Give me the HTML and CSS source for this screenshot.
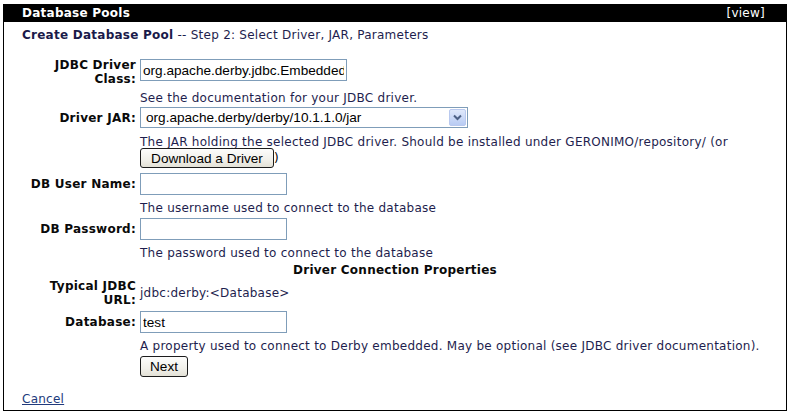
FILE: index.html
```html
<!DOCTYPE html>
<html>
<head>
<meta charset="utf-8">
<link rel="stylesheet" href="styles.css">
</head>
<body>
<div class="portlet">
  <div class="titlebar">
    <span class="title">Database Pools</span>
    <span class="mode">[view]</span>
  </div>
  <div class="content">
    <div class="step"><b>Create Database Pool</b> -- Step 2: Select Driver, JAR, Parameters</div>
    <table class="form">
      <tr class="r-class">
        <th>JDBC Driver Class:</th>
        <td><input class="field wide" type="text" value="org.apache.derby.jdbc.EmbeddedDriver"></td>
      </tr>
      <tr class="help first">
        <th></th>
        <td>See the documentation for your JDBC driver.</td>
      </tr>
      <tr class="r-jar">
        <th>Driver JAR:</th>
        <td>
          <div class="select">
            <span class="select-value">org.apache.derby/derby/10.1.1.0/jar</span>
            <span class="select-btn"><svg width="9" height="7" viewBox="0 0 9 7"><path d="M1 1.5 L4.5 5 L8 1.5" fill="none" stroke="#4d6185" stroke-width="2"/></svg></span>
          </div>
        </td>
      </tr>
      <tr class="help dl">
        <th></th>
        <td>The JAR holding the selected JDBC driver. Should be installed under GERONIMO/repository/ (or
          <div class="dl-line"><button class="btn">Download a Driver</button><span>)</span></div>
        </td>
      </tr>
      <tr class="r-input">
        <th>DB User Name:</th>
        <td><input class="field" type="text" value=""></td>
      </tr>
      <tr class="help">
        <th></th>
        <td>The username used to connect to the database</td>
      </tr>
      <tr class="r-input">
        <th>DB Password:</th>
        <td><input class="field" type="password" value=""></td>
      </tr>
      <tr class="help">
        <th></th>
        <td>The password used to connect to the database</td>
      </tr>
      <tr class="section">
        <th colspan="2">Driver Connection Properties</th>
      </tr>
      <tr class="r-url">
        <th>Typical JDBC URL:</th>
        <td>jdbc:derby:&lt;Database&gt;</td>
      </tr>
      <tr class="r-input">
        <th>Database:</th>
        <td><input class="field" type="text" value="test"></td>
      </tr>
      <tr class="help">
        <th></th>
        <td>A property used to connect to Derby embedded. May be optional (see JDBC driver documentation).</td>
      </tr>
      <tr class="r-next">
        <th></th>
        <td><button class="btn next">Next</button></td>
      </tr>
    </table>
    <div class="cancel"><a href="#">Cancel</a></div>
  </div>
</div>
</body>
</html>
```
FILE: styles.css
```css
html, body {
  margin: 0;
  padding: 0;
  background: #ffffff;
}
body {
  padding: 4px 3px 0 3px;
  font-family: "DejaVu Sans", Verdana, sans-serif;
  font-size: 12px;
  letter-spacing: 0.25px;
  color: #1e1e4e;
}
.portlet {
  border: 1px solid #000;
  border-top: none;
  height: 407px;
  box-sizing: border-box;
}
.titlebar {
  background: #000;
  color: #fff;
  height: 18px;
  display: flex;
  align-items: center;
  justify-content: space-between;
  padding: 0 21px 0 18px;
}
.title {
  font-weight: bold;
}
.mode {
  font-weight: normal;
}
.content {
  padding: 6px 18px 0 18px;
}
.step {
  line-height: 14px;
}
.step b {
  color: #1a1a4a;
}
.form {
  border-collapse: collapse;
  margin-top: 16px;
  width: 100%;
}
.form th {
  width: 114px;
  text-align: right;
  font-weight: bold;
  color: #0a0a0a;
  padding: 0 4px 0 0;
  line-height: 14px;
  vertical-align: middle;
}
.form td {
  padding: 0;
  line-height: 14px;
  vertical-align: middle;
  white-space: nowrap;
}
.r-class th { vertical-align: top; }
.r-class td { vertical-align: top; padding-top: 1px; }
.help td { padding-top: 4px; padding-bottom: 2px; }
.help.first td { padding-top: 5px; padding-bottom: 1px; }
.r-jar th, .r-jar td { padding-top: 1px; padding-bottom: 2px; }
.dl td { padding-top: 5px; padding-bottom: 4px; }
.dl-line {
  display: flex;
  align-items: center;
  margin-top: -1px;
  color: #000;
}
.r-input th, .r-input td { padding-top: 1px; padding-bottom: 2px; }
.section th {
  text-align: center;
  width: auto;
  padding: 1px 0 0 0;
  color: #0a0a0a;
}
.r-url th { padding-top: 2px; padding-bottom: 3px; }
.r-url td { padding-top: 2px; padding-bottom: 3px; }
.r-next td { padding-top: 1px; }
.field {
  box-sizing: border-box;
  width: 147px;
  height: 22px;
  border: 1px solid #7f9db9;
  margin: 0;
  padding: 1px 2px;
  font-family: "Liberation Sans", Arial, sans-serif;
  font-size: 13.6px;
  letter-spacing: 0;
  color: #000;
  background: #fff;
  display: block;
}
.field.wide {
  width: 207px;
}
.select {
  box-sizing: border-box;
  width: 328px;
  height: 21px;
  border: 1px solid #7f9db9;
  display: flex;
  align-items: center;
  justify-content: space-between;
  padding: 0 1px 0 5px;
  font-family: "Liberation Sans", Arial, sans-serif;
  font-size: 13.6px;
  letter-spacing: 0;
  color: #000;
  background: #fff;
}
.select-btn {
  width: 17px;
  height: 17px;
  box-sizing: border-box;
  border: 1px solid #b9c9ef;
  border-radius: 2px;
  background: linear-gradient(#dfe8fb, #b8cbf3);
  display: flex;
  align-items: center;
  justify-content: center;
}
.btn {
  box-sizing: border-box;
  height: 20px;
  width: 134px;
  margin: 0;
  padding: 0;
  border: 1px solid #1c1c1c;
  border-radius: 3px;
  background: linear-gradient(#fdfdfc 0%, #f1f0ea 60%, #e3e1d6 100%);
  font-family: "Liberation Sans", Arial, sans-serif;
  font-size: 13.6px;
  letter-spacing: 0;
  color: #000;
  display: block;
}
.btn.next {
  width: 48px;
  height: 21px;
}
.cancel {
  margin-top: 15px;
  line-height: 14px;
}
.cancel a {
  color: #213a7c;
  text-decoration: underline;
}
```
